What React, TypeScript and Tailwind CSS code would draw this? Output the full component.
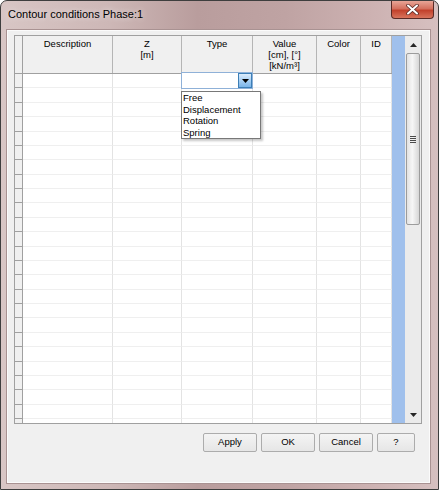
import React from 'react';

const columns = [
  { cls: 'w-[90px]', lines: ['Description'] },
  { cls: 'w-[69px]', lines: ['Z', '[m]'] },
  { cls: 'w-[71px]', lines: ['Type'] },
  { cls: 'w-[64px]', lines: ['Value', '[cm], [°]', '[kN/m³]'] },
  { cls: 'w-[44px]', lines: ['Color'] },
  { cls: 'w-[31px]', lines: ['ID'] },
];

const rows = Array.from({ length: 25 }, (_, i) => i);

const options = ['Free', 'Displacement', 'Rotation', 'Spring'];

const ArrowUp = () => (
  <svg width="7" height="4" viewBox="0 0 7 4">
    <path d="M3.5 0 L7 4 L0 4 Z" fill="#262626" />
  </svg>
);

const ArrowDown = () => (
  <svg width="7" height="4" viewBox="0 0 7 4">
    <path d="M0 0 L7 0 L3.5 4 Z" fill="#262626" />
  </svg>
);

const Scrollbar: React.FC = () => (
  <div className="flex h-full w-[16px] flex-col bg-[#ebebeb]">
    <div className="flex h-[17px] items-center justify-center">
      <ArrowUp />
    </div>
    <div className="mx-[1px] flex h-[172px] items-center justify-center rounded-[2px] border border-[#9c9c9c] bg-[linear-gradient(90deg,#e2e2e2,#f6f6f6_45%,#d6d6d6)]">
      <div className="flex w-[6px] flex-col gap-[1px]">
        <div className="h-[1px] bg-[#4a4a4a]" />
        <div className="h-[1px] bg-[#4a4a4a]" />
        <div className="h-[1px] bg-[#4a4a4a]" />
        <div className="h-[1px] bg-[#4a4a4a]" />
      </div>
    </div>
    <div className="flex-1" />
    <div className="flex h-[17px] items-center justify-center">
      <ArrowDown />
    </div>
  </div>
);

const Grid: React.FC = () => (
  <div className="relative flex h-[389px] w-[408px] overflow-hidden border border-[#a0a0a0] bg-white">
    <div className="flex w-[377px] flex-col">
      {/* header */}
      <div className="flex h-[38px] shrink-0 border-b border-[#a0a0a0] bg-[#f0f0f0]">
        <div className="w-[8px] border-r border-[#a0a0a0]" />
        {columns.map((c, i) => (
          <div
            key={i}
            className={`${c.cls} flex flex-col items-center border-r border-[#b5b5b5] pt-[2px] leading-[11px]`}
          >
            {c.lines.map((l, j) => (
              <span key={j}>{l}</span>
            ))}
          </div>
        ))}
      </div>
      {/* rows */}
      {rows.map((r) => (
        <div key={r} className="flex h-[14.375px] shrink-0">
          <div className="w-[8px] border-r border-b border-[#a0a0a0] bg-[#f0f0f0]" />
          {columns.map((c, i) => (
            <div key={i} className={`${c.cls} border-r border-b border-r-[#e3e3e3] border-b-[#efefef]`} />
          ))}
        </div>
      ))}
    </div>
    <div className="h-full w-[13px] bg-[#a0c0ec]" />
    <Scrollbar />

    {/* combo editor in the Type cell */}
    <div className="absolute top-[36px] left-[166px] flex h-[17px] w-[72px] border border-[#8fb1d8] bg-white">
      <div className="flex-1" />
      <div className="flex w-[14px] items-center justify-center border border-[#3d7fb6] bg-[linear-gradient(180deg,#dcecfb,#a9d0f3_50%,#7ab4e8)]">
        <svg width="7" height="4" viewBox="0 0 7 4">
          <path d="M0 0 L7 0 L3.5 4 Z" fill="#000" />
        </svg>
      </div>
    </div>
    <div className="absolute top-[55px] left-[166px] flex w-[80px] flex-col border border-[#787878] bg-white pl-[1px] leading-[11.5px] shadow-[2px_2px_2px_rgba(0,0,0,0.22)]">
      {options.map((o) => (
        <span key={o}>{o}</span>
      ))}
    </div>
  </div>
);

const Btn: React.FC<{ label: string; w: string }> = ({ label, w }) => (
  <button
    className={`${w} flex h-[19px] items-center justify-center rounded-[2px] border border-[#acacac] bg-[linear-gradient(180deg,#f4f4f4,#e6e6e6)] text-black`}
  >
    {label}
  </button>
);

export default function App() {
  return (
    <div className="flex h-[490px] w-[439px] flex-col overflow-hidden rounded-t-[7px] border border-[#3e3e3e] bg-[linear-gradient(90deg,#d8c6c5_0%,#cdb7b6_25%,#b99d9d_45%,#bfa3a3_65%,#cdb2b2_85%,#d6c0c0_100%)] font-['Liberation_Sans',Arial,sans-serif] text-[9.5px] text-black">
      {/* title bar */}
      <div className="relative flex h-[29px] shrink-0 items-center pl-[7px] pb-[2px] text-[11px]">
        <span className="[text-shadow:0_0_6px_rgba(255,255,255,0.8)]">Contour conditions Phase:1</span>
        <div className="absolute top-0 right-[4px] flex h-[18px] w-[43px] items-center justify-center rounded-b-[4px] border border-t-0 border-[#5a2a26] bg-[linear-gradient(180deg,#e8a597,#d4705e_45%,#c2412c_55%,#d8735c)]">
          <svg width="13" height="11" viewBox="0 0 13 11">
            <path d="M2 1.5 L11 9.5 M11 1.5 L2 9.5" stroke="#5a2a26" strokeWidth="3.6" strokeLinecap="round" />
            <path d="M2 1.5 L11 9.5 M11 1.5 L2 9.5" stroke="#ffffff" strokeWidth="2" strokeLinecap="round" />
          </svg>
        </div>
      </div>
      {/* client area */}
      <div className="mx-[6px] flex h-[453px] w-[423px] shrink-0 flex-col border border-[#fbfbfb] bg-[#f0f0f0] pt-[4px] pl-[6px] shadow-[0_0_0_1px_#a99292]">
        <Grid />
        <div className="mt-[9px] flex w-[408px] justify-end gap-[4px] pr-[7px]">
          <Btn label="Apply" w="w-[54px]" />
          <Btn label="OK" w="w-[54px]" />
          <Btn label="Cancel" w="w-[54px]" />
          <Btn label="?" w="w-[38px]" />
        </div>
      </div>
    </div>
  );
}
